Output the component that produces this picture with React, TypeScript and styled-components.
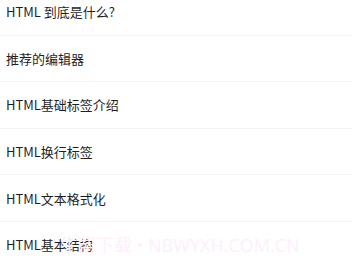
import React from "react";
import styled, { createGlobalStyle } from "styled-components";

const Global = createGlobalStyle`
  html, body { margin: 0; padding: 0; background: #ffffff; }
  body { width: 352px; height: 265px; overflow: hidden; }
`;

const Page = styled.div`
  position: relative;
  width: 352px;
  height: 265px;
  overflow: hidden;
  background: #ffffff;
  font-family: "Noto Sans CJK SC", "Noto Sans", sans-serif;
`;

const List = styled.ul`
  list-style: none;
  margin: -11px 0 0 0;
  padding: 0;
`;

const Row = styled.li`
  height: 45.6px;
  display: flex;
  align-items: center;
  padding: 0 6px;
  border-bottom: 1px solid #f3f3f3;
  font-size: 13px;
  color: #1f1f1f;
`;

const Watermark = styled.div`
  position: absolute;
  left: 60px;
  top: 231px;
  font-family: "Open Sans", "Noto Sans CJK SC", sans-serif;
  font-size: 18px;
  color: #fdeffb;
  white-space: nowrap;
  pointer-events: none;
`;

const items = [
  "HTML 到底是什么?",
  "推荐的编辑器",
  "HTML基础标签介绍",
  "HTML换行标签",
  "HTML文本格式化",
  "HTML基本结构",
];

export default function App() {
  return (
    <Page>
      <Global />
      <List>
        {items.map((t) => (
          <Row key={t}>{t}</Row>
        ))}
      </List>
      <Watermark>牛帮下载 • NBWYXH.COM.CN</Watermark>
    </Page>
  );
}
